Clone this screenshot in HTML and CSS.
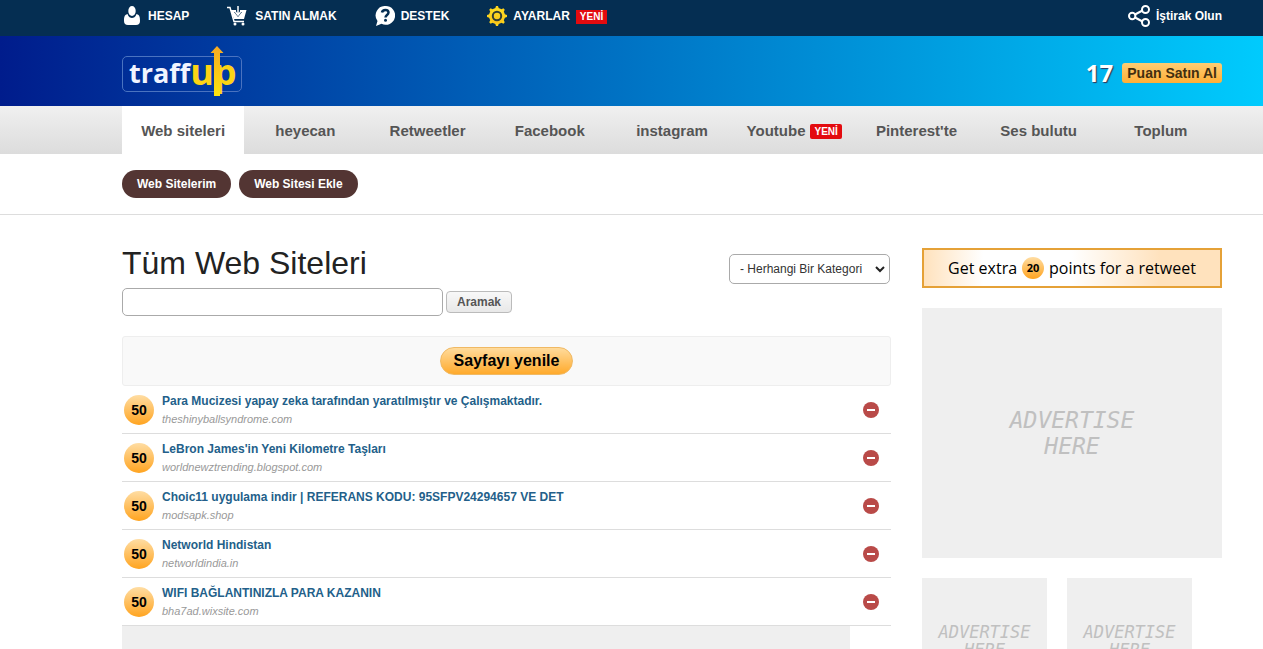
FILE: index.html
```html
<!DOCTYPE html>
<html lang="tr">
<head>
<meta charset="utf-8">
<title>Tüm Web Siteleri</title>
<link rel="stylesheet" href="styles.css">
</head>
<body>
<header>
  <div class="topbar wrap">
    <nav class="account">
      <a class="acc-link wide" href="#"><svg width="16" height="20" viewBox="0 0 16 20" fill="#fff"><ellipse cx="8" cy="5" rx="3.700" ry="5"/><path d="M3.500 8C0 9 0 12 0 15q0 4 4 4h8q4 0 4-4c0-3 0-6-3.500-7-1 3-3 4-4.500 4s-3.500-1-4.500-4z"/></svg>HESAP</a>
      <a class="acc-link wide" href="#"><svg width="20" height="20" viewBox="0 0 20 20" fill="none"><path d="M0 1.500h3l4 14h10" stroke="#fff" stroke-width="1.500"/><path d="M3.500 4H9v2H7l4 5 4-5h-2V4h6.500L17 13H7z" fill="#fff"/><path d="M11 0v8M8.500 6l2.500 3 2.500-3" stroke="#fff" stroke-width="1.500"/><circle cx="8" cy="18" r="1.500" fill="#fff"/><circle cx="16" cy="18" r="1.500" fill="#fff"/></svg>SATIN ALMAK</a>
      <a class="acc-link" href="#"><svg width="20" height="20" viewBox="0 0 20 20"><path d="M10.500 0a9.400 9.400 0 1 1-4 17.800L1 20l1.500-5A9.400 9.400 0 0 1 10.500 0z" fill="#fff"/><path d="M7 6.500c.5-3.500 6.500-3.500 6.500 0 0 2.500-3 2.500-3 5" fill="none" stroke="#052e52" stroke-width="2.500"/><circle cx="10.500" cy="14.200" r="1.500" fill="#052e52"/></svg>DESTEK</a>
      <a class="acc-link" href="#"><svg width="20" height="20" viewBox="0 0 20 20"><defs><linearGradient id="gg" gradientUnits="userSpaceOnUse" x1="10" y1="0" x2="10" y2="20"><stop stop-color="#fde52a"/><stop offset="1" stop-color="#f8bd16"/></linearGradient></defs><g fill="#fbd21c"><circle cx="10" cy="10" r="8"/><path id="t" d="M8 3l1-3h2l1 3v14l-1 3H9l-1-3z"/><use href="#t" transform="rotate(45 10 10)"/><use href="#t" transform="rotate(90 10 10)"/><use href="#t" transform="rotate(135 10 10)"/></g><circle cx="10" cy="10" r="7.500" fill="url(#gg)"/><circle cx="10" cy="10" r="4.200" fill="none" stroke="#303d35" stroke-width="2"/></svg>AYARLAR<span class="new square">YENİ</span></a>
    </nav>
    <a class="acc-link" href="#"><svg width="22" height="22" viewBox="0 0 22 22" fill="none" stroke="#fff" stroke-width="2"><path d="M7 9.500l7.500-4M7 12.500l7.500 4"/><circle cx="4.200" cy="11" r="3.200"/><circle cx="17.500" cy="4.500" r="3.500"/><circle cx="17.500" cy="17.500" r="3.500"/></svg>İştirak Olun</a>
  </div>
  <div class="banner wrap">
    <a class="logo" href="#"><span class="traff">traff</span><span class="up">up</span><svg class="arrow" width="14" height="50" viewBox="0 0 14 50"><defs><linearGradient id="ag" x2="0" y2="1"><stop stop-color="#f7a823"/><stop offset="1" stop-color="#fde50e"/></linearGradient></defs><path d="M7 0l6.500 7H10v43H4V7H.5z" fill="url(#ag)"/></svg></a>
    <div class="points"><span class="total">17</span><a class="buy" href="#">Puan Satın Al</a></div>
  </div>
  <nav class="tabs wrap">
    <a class="tab active" href="#">Web siteleri</a>
    <a class="tab" href="#">heyecan</a>
    <a class="tab" href="#">Retweetler</a>
    <a class="tab" href="#">Facebook</a>
    <a class="tab" href="#">instagram</a>
    <a class="tab" href="#">Youtube<span class="new">YENİ</span></a>
    <a class="tab" href="#">Pinterest'te</a>
    <a class="tab" href="#">Ses bulutu</a>
    <a class="tab" href="#">Toplum</a>
  </nav>
  <div class="subnav wrap">
    <a class="pill" href="#">Web Sitelerim</a>
    <a class="pill" href="#">Web Sitesi Ekle</a>
  </div>
</header>
<div class="page wrap">
  <main>
    <div class="heading">
      <div>
        <h1>Tüm Web Siteleri</h1>
        <form class="search">
          <input class="query" type="text" aria-label="Aramak">
          <button class="go" type="button">Aramak</button>
        </form>
      </div>
      <div class="pick">
        <select class="category" aria-label="Kategori"><option>- Herhangi Bir Kategori</option></select>
        <svg class="chevron" width="10" height="7" viewBox="0 0 10 7" fill="none" stroke="#222" stroke-width="2"><path d="M1 1l4 4 4-4"/></svg>
      </div>
    </div>
    <div class="refresh"><button class="reload" type="button">Sayfayı yenile</button></div>
    <ul class="sites">
      <li class="site"><span class="coin">50</span><div class="info"><a class="name" href="#">Para Mucizesi yapay zeka tarafından yaratılmıştır ve Çalışmaktadır.</a><span class="domain">theshinyballsyndrome.com</span></div><button class="hide" type="button" aria-label="Gizle"></button></li>
      <li class="site"><span class="coin">50</span><div class="info"><a class="name" href="#">LeBron James'in Yeni Kilometre Taşları</a><span class="domain">worldnewztrending.blogspot.com</span></div><button class="hide" type="button" aria-label="Gizle"></button></li>
      <li class="site"><span class="coin">50</span><div class="info"><a class="name" href="#">Choic11 uygulama indir | REFERANS KODU: 95SFPV24294657 VE DET</a><span class="domain">modsapk.shop</span></div><button class="hide" type="button" aria-label="Gizle"></button></li>
      <li class="site"><span class="coin">50</span><div class="info"><a class="name" href="#">Networld Hindistan</a><span class="domain">networldindia.in</span></div><button class="hide" type="button" aria-label="Gizle"></button></li>
      <li class="site"><span class="coin">50</span><div class="info"><a class="name" href="#">WIFI BAĞLANTINIZLA PARA KAZANIN</a><span class="domain">bha7ad.wixsite.com</span></div><button class="hide" type="button" aria-label="Gizle"></button></li>
    </ul>
    <div class="leaderboard"></div>
  </main>
  <aside>
    <a class="retweet" href="#">Get extra <span class="coin mini">20</span> points for a retweet</a>
    <a class="ad" href="#">ADVERTISE<br>HERE</a>
    <div class="small-ads">
      <a class="ad small" href="#">ADVERTISE<br>HERE</a>
      <a class="ad small" href="#">ADVERTISE<br>HERE</a>
    </div>
  </aside>
</div>
</body>
</html>
```

FILE: styles.css
```css
* { box-sizing: border-box; }
html { overflow: hidden; }
body {
  margin: 0;
  background: #fff;
  color: #222;
  font-family: "Liberation Sans", Arial, sans-serif;
  font-size: 12px;
}
a { text-decoration: none; color: inherit; }
.wrap { padding-left: 122px; padding-right: 41px; }

.topbar {
  display: flex;
  justify-content: space-between;
  height: 36px;
  padding-bottom: 4px;
  background: #052e52;
  color: #fff;
  font-weight: bold;
  line-height: 16px;
}
.account { display: flex; gap: 38px; padding-left: 2px; }
.acc-link { display: flex; align-items: center; gap: 6px; white-space: nowrap; }
.acc-link.wide { gap: 8px; }
.new {
  background: #e30b0f;
  color: #fff;
  font-size: 10px;
  line-height: 15px;
  padding: 0 4px;
  border-radius: 2px;
  margin: 2px 0 0 5px;
  font-weight: bold;
}
.new.square { border-radius: 0; margin-left: 0; line-height: 14px; }

.banner {
  display: flex;
  justify-content: space-between;
  align-items: center;
  height: 70px;
  background: linear-gradient(90deg, #001c8c, #00cbfd);
}
.logo {
  position: relative;
  display: flex;
  align-items: center;
  width: 120px;
  height: 36px;
  margin-top: 6px;
  padding: 0 0 4px 6px;
  border: 1px solid #4a73c0;
  border-radius: 5px;
  font-family: "Open Sans", sans-serif;
  font-weight: bold;
  color: #f1f4ff;
}
.traff { font-size: 27px; }
.up {
  font-size: 36px;
  line-height: 30px;
  color: #fcd415;
}
.arrow { position: absolute; left: 87px; top: -11px; }
.points { display: flex; align-items: center; gap: 9px; padding-top: 4px; }
.total {
  font-family: "Open Sans", sans-serif;
  font-size: 24px;
  line-height: 28px;
  font-weight: bold;
  color: #fff;
  text-shadow: 1px 1px 1px #335;
}
.buy {
  padding: 0 5px;
  border-radius: 3px;
  background: linear-gradient(#ffcd73, #ffaf37);
  color: #432f10;
  font-size: 14px;
  line-height: 20px;
  font-weight: bold;
}

.tabs {
  display: grid;
  grid-template-columns: repeat(9, 1fr);
  height: 48px;
  background: linear-gradient(#f0f0f0, #dcdcdc);
}
.tab {
  display: flex;
  align-items: center;
  justify-content: center;
  color: #555;
  font-size: 15px;
  font-weight: bold;
  white-space: nowrap;
}
.tab.active { background: #fff; }
.subnav {
  display: flex;
  gap: 8px;
  padding-top: 16px;
  padding-bottom: 16px;
  border-bottom: 1px solid #ddd;
}
.pill {
  padding: 0 15px;
  border-radius: 14px;
  background: #533533;
  color: #fff;
  line-height: 28px;
  font-weight: bold;
}

.page {
  display: grid;
  grid-template-columns: minmax(0, 1fr) 300px;
  gap: 31px;
  padding-top: 29px;
}
.heading { display: flex; justify-content: space-between; }
h1 { margin: 0; font-size: 32px; line-height: 38px; font-weight: normal; }
.search { display: flex; align-items: center; gap: 3px; margin-top: 6px; }
.query {
  width: 321px;
  height: 28px;
  border: 1px solid #aaa;
  border-radius: 5px;
  background: #fff;
}
.go {
  height: 22px;
  padding: 0 10px;
  border: 1px solid #bbb;
  border-radius: 4px;
  background: linear-gradient(#f8f8f8, #e8e8e8);
  color: #555;
  font: bold 12px "Liberation Sans", Arial, sans-serif;
}
.pick { position: relative; margin: 10px 1px 0 0; align-self: flex-start; }
.category {
  display: block;
  width: 161px;
  height: 30px;
  padding: 0 10px;
  border: 1px solid #aaa;
  border-radius: 5px;
  background: #fff;
  color: #333;
  font: 12px "Liberation Sans", Arial, sans-serif;
  appearance: none;
}
.chevron { position: absolute; right: 5px; top: 12px; pointer-events: none; }
.refresh {
  display: flex;
  justify-content: center;
  margin-top: 20px;
  padding: 10px;
  border: 1px solid #eee;
  border-radius: 3px;
  background: #f9f9f9;
}
.reload {
  height: 28px;
  padding: 0 13px;
  border: 1px solid #f0b964;
  border-radius: 14px;
  background: linear-gradient(#ffdb9c, #ffaa2c);
  color: #000;
  font: bold 16px "Liberation Sans", Arial, sans-serif;
}
.sites { margin: 0; padding: 0; list-style: none; }
.site {
  display: flex;
  align-items: center;
  height: 48px;
  padding: 0 12px 0 2px;
  border-bottom: 1px solid #ddd;
}
.coin {
  width: 30px;
  height: 30px;
  border-radius: 50%;
  background: linear-gradient(#ffdda3, #ffa420);
  color: #000;
  font-size: 14px;
  line-height: 30px;
  font-weight: bold;
  text-align: center;
}
.info { flex: 1; padding: 1px 0 0 8px; }
.name { display: block; color: #235f8a; line-height: 18px; font-weight: bold; }
.domain { display: block; color: #999; font-size: 11px; line-height: 18px; font-style: italic; }
.hide {
  display: grid;
  place-items: center;
  width: 16px;
  height: 16px;
  padding: 0;
  border: 0;
  border-radius: 50%;
  background: #b94a48;
}
.hide::before { content: ""; width: 8px; height: 2px; background: #fff; }
.leaderboard { width: 728px; max-width: 100%; height: 90px; background: #efefef; }

.retweet {
  display: flex;
  align-items: center;
  justify-content: center;
  gap: 5px;
  margin-top: 4px;
  height: 40px;
  padding-bottom: 1px;
  border: 2px solid #e5a137;
  background: linear-gradient(90deg, #ffe2bd, #fff 20%, #fff 50%, #ffe2bd 80%);
  color: #000;
  font-family: "Open Sans", sans-serif;
  font-size: 16px;
  white-space: nowrap;
}
.coin.mini { width: 22px; height: 22px; font-size: 11px; line-height: 22px; }
.ad {
  display: flex;
  align-items: center;
  justify-content: center;
  margin-top: 20px;
  height: 250px;
  background: #efefef;
  color: #c0c0c0;
  font: italic 23px/26px "DejaVu Sans Mono", monospace;
  text-align: center;
}
.small-ads { display: flex; gap: 20px; margin-top: 20px; }
.ad.small { width: 125px; height: 125px; margin: 0; font-size: 17px; line-height: 18px; }
```
